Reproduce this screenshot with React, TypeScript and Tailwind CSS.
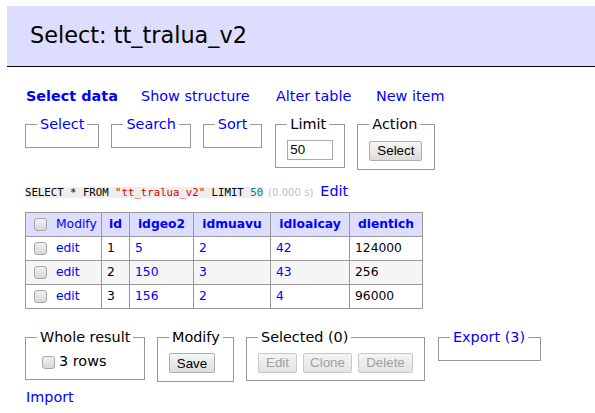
import React from "react";

const Check = ({ cls }: { cls: string }) => (
  <span
    className={`inline-block w-[13px] h-[13px] rounded-[3px] border border-[#a6a6a6] bg-linear-to-b from-[#f0f0f0] to-[#d8d8d8] ${cls}`}
  />
);

const Btn = ({ label, w, disabled }: { label: string; w: string; disabled?: boolean }) => (
  <span
    className={
      disabled
        ? `inline-flex items-center justify-center h-[20px] ${w} rounded-[2px] border border-[#c9c9c9] bg-linear-to-b from-[#f4f4f4] to-[#e3e3e3] text-[#a0a0a0] text-[13.33px] leading-none`
        : `inline-flex items-center justify-center h-[20px] ${w} rounded-[2px] border border-[#adadad] bg-linear-to-b from-[#f6f6f6] to-[#dcdcdc] text-black text-[13.33px] leading-none`
    }
    style={{ fontFamily: '"Liberation Sans", Arial, sans-serif' }}
  >
    {label}
  </span>
);

const FS = ({
  legend,
  link,
  w,
  children,
}: {
  legend: string;
  link?: boolean;
  w: string;
  children?: React.ReactNode;
}) => (
  <fieldset className={`border border-[#999] pl-[11px] pt-[7px] pb-[7px] ${w}`}>
    <legend
      className={`px-[3px] leading-[17px] whitespace-nowrap ${link ? "text-[#0000ff]" : "text-black"}`}
    >
      {legend}
    </legend>
    {children}
  </fieldset>
);

const rows = [
  { id: "1", g: "5", m: "2", l: "42", d: "124000", odd: false },
  { id: "2", g: "150", m: "3", l: "43", d: "256", odd: true },
  { id: "3", g: "156", m: "2", l: "4", d: "96000", odd: false },
];

export default function App() {
  return (
    <div
      className="w-[595px] h-[413px] overflow-hidden bg-white text-black text-[14.4px]"
      style={{ fontFamily: '"DejaVu Sans", Verdana, sans-serif' }}
    >
      <div className="mt-[6px] ml-[7px] h-[61px] bg-[#ddddff] border-b border-black flex items-center pl-[23px] text-[22.4px]">
        Select: tt_tralua_v2
      </div>

      <div className="mt-[20px] pl-[26px] flex leading-[18px] text-[#0000ff]">
        <span className="w-[115px] font-bold">Select data</span>
        <span className="w-[135px]">Show structure</span>
        <span className="w-[100px]">Alter table</span>
        <span>New item</span>
      </div>

      <div className="mt-[11px] pl-[25px] flex items-start gap-[12px]">
        <FS legend="Select" link w="w-[74px] pr-[11px]" />
        <FS legend="Search" link w="w-[79px] pr-[11px]" />
        <FS legend="Sort" link w="w-[59px] pr-[11px]" />
        <FS legend="Limit" w="w-[70px] ml-[1px] pr-[11px]">
          <span
            className="flex items-center h-[20px] w-[46px] border border-[#a9a9a9] bg-white pl-[2px] text-[13.33px]"
            style={{ fontFamily: '"Liberation Sans", Arial, sans-serif' }}
          >
            50
          </span>
        </FS>
        <FS legend="Action" w="w-[78px] pr-[11px]">
          <Btn label="Select" w="w-[53px]" />
        </FS>
      </div>

      <div className="mt-[12px] pl-[25px] flex items-baseline leading-[18px]">
        <code
          className="inline-block h-[11px] leading-[11px] bg-[#eeeeee] text-[10.7px] text-[#000]"
          style={{ fontFamily: '"DejaVu Sans Mono", monospace' }}
        >
          SELECT * FROM <span className="text-[#dd0000]">"tt_tralua_v2"</span> LIMIT{" "}
          <span className="text-[#008080]">50</span>
        </code>
        <span className="ml-[5px] text-[10.1px] text-[#c0c0c0]">(0.000 s)</span>
        <span className="ml-[7px] text-[#0000ff]">Edit</span>
      </div>

      <div className="mt-[10px] ml-[25px] inline-grid grid-cols-[76px_28px_64px_77px_79px_73px] border-l border-t border-[#999] text-[12.3px]">
        <div className="h-[24px] border-r border-b border-[#999] bg-[#ddddff] flex items-center pl-[8px]">
          <Check cls="" />
          <span className="ml-[9px] text-[#0000ff]">Modify</span>
        </div>
        {["id", "idgeo2", "idmuavu", "idloaicay", "dientich"].map((h) => (
          <div
            key={h}
            className="h-[24px] border-r border-b border-[#999] bg-[#ddddff] flex items-center justify-center font-bold text-[#0000ff]"
          >
            {h}
          </div>
        ))}
        {rows.map((r) => {
          const bg = r.odd ? "bg-[#f5f5f5]" : "bg-white";
          const c = `h-[24px] border-r border-b border-[#999] ${bg} flex items-center pl-[5px]`;
          return (
            <React.Fragment key={r.id}>
              <div className={`h-[24px] border-r border-b border-[#999] ${bg} flex items-center pl-[8px]`}>
                <Check cls="" />
                <span className="ml-[9px] text-[#0000ff]">edit</span>
              </div>
              <div className={c}>{r.id}</div>
              <div className={`${c} text-[#0000ff]`}>{r.g}</div>
              <div className={`${c} text-[#0000ff]`}>{r.m}</div>
              <div className={`${c} text-[#0000ff]`}>{r.l}</div>
              <div className={c}>{r.d}</div>
            </React.Fragment>
          );
        })}
      </div>

      <div className="mt-[20px] pl-[25px] flex items-start gap-[12px]">
        <FS legend="Whole result" w="w-[120px] pr-[4px]">
          <div className="h-[19px] flex items-center pl-[5px]">
            <Check cls="" />
            <span className="ml-[4px]">3 rows</span>
          </div>
        </FS>
        <FS legend="Modify" w="w-[77px] pr-[4px]">
          <Btn label="Save" w="w-[46px]" />
        </FS>
        <FS legend="Selected (0)" w="w-[179px] pr-[4px]">
          <div className="flex gap-[6px]">
            <Btn label="Edit" w="w-[39px]" disabled />
            <Btn label="Clone" w="w-[49px]" disabled />
            <Btn label="Delete" w="w-[55px]" disabled />
          </div>
        </FS>
        <FS legend="Export (3)" link w="w-[103px] ml-[1px] pr-[4px]" />
      </div>

      <div className="mt-[6px] pl-[26px] leading-[18px] text-[#0000ff]">Import</div>
    </div>
  );
}
